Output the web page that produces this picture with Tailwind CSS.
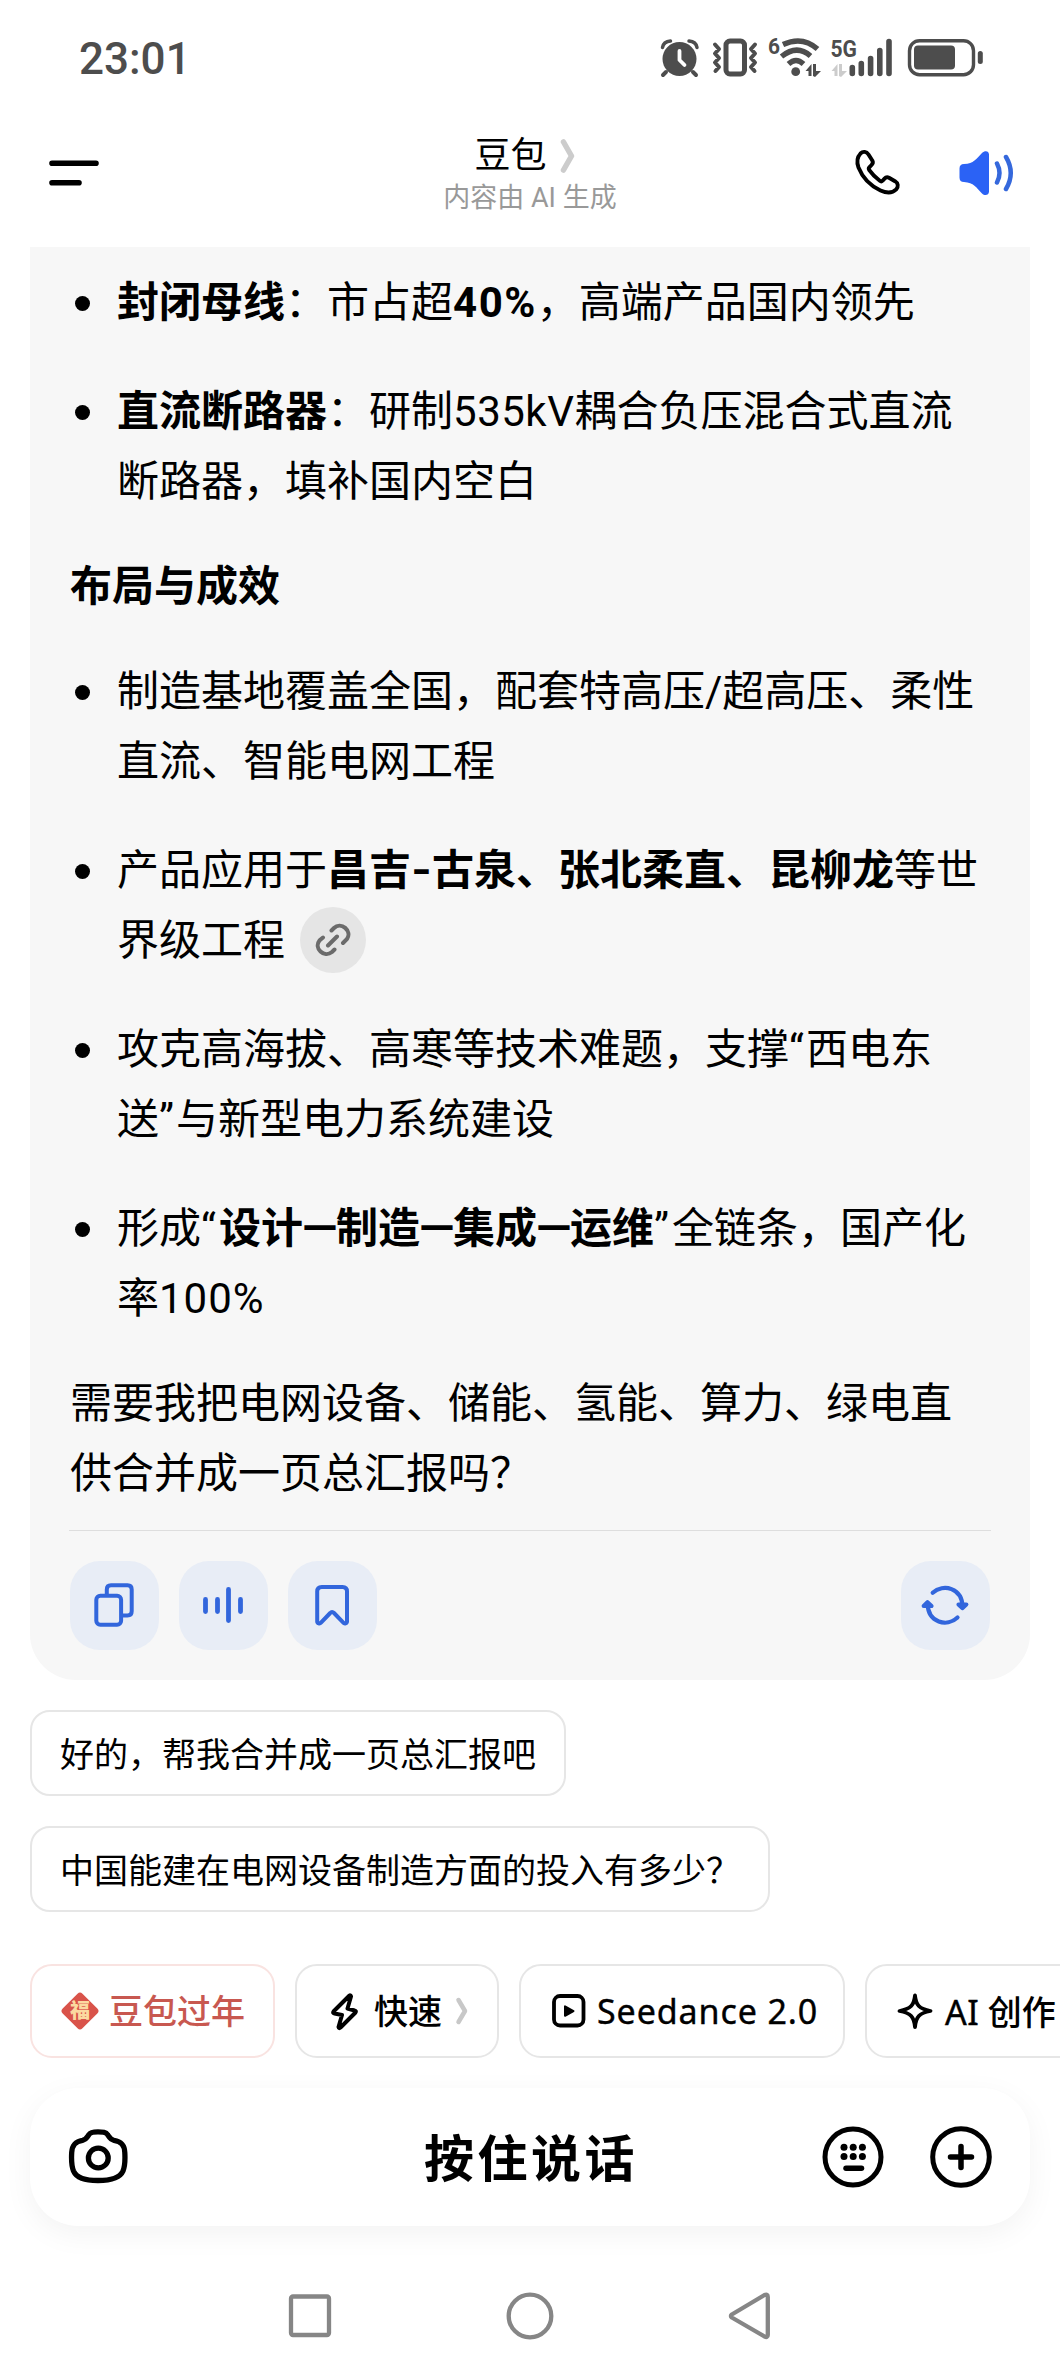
<!DOCTYPE html>
<html lang="zh-CN">
<head>
  <meta charset="UTF-8" />
  <meta name="viewport" content="width=device-width, initial-scale=1.0" />
  <title>豆包</title>
  <script src="https://cdn.jsdelivr.net/npm/@tailwindcss/browser@4"></script>
</head>
<body class="w-[1060px] h-[2376px] overflow-hidden bg-white text-black font-[Roboto,'Noto_Sans_CJK_SC',sans-serif] flex flex-col">

  <!-- status bar -->
  <div class="h-[115px] shrink-0 flex items-start justify-between">
    <div class="pl-[79px] pt-[33px] text-[44px] leading-[52px] font-medium text-[#4d4d4d]">23:01</div>
    <svg class="mt-5 mr-10 w-[380px] h-20" viewBox="640 20 380 80" fill="none" stroke="#4d4d4d" stroke-linecap="round" stroke-linejoin="round">
      <!-- alarm -->
      <circle cx="679.5" cy="59" r="17" fill="#4d4d4d" stroke="none" />
      <path d="M666 72l-3 3M693 72l3 3" stroke-width="4" />
      <path d="M662.500 47.500Q663.500 41.500 670.500 41M697 47.500Q696 41.500 689 41" stroke-width="3.500" />
      <path d="M679.500 51v9l5 5" stroke="#fff" stroke-width="3.800" />
      <!-- vibrate -->
      <rect x="726" y="41" width="18.500" height="33" rx="4" stroke-width="5" />
      <path d="M715 44.500l4 4.500-4 4.500 4 4.500-4 4.500 4 4.500-3.500 4M755 44.500l-4 4.500 4 4.500-4 4.500 4 4.500-4 4.500 3.500 4" stroke-width="4" />
      <!-- wifi -->
      <text x="768" y="53.500" font-size="22" font-weight="700" fill="#4d4d4d" stroke="none" textLength="12" lengthAdjust="spacingAndGlyphs">6</text>
      <path d="M783 44.500Q802.500 35.500 817.500 49M781.500 56.500Q797 44 810.500 56M788.500 64Q796 57 803.500 64" stroke-width="5.400" stroke-linecap="butt" />
      <circle cx="795.700" cy="71.700" r="4.400" fill="#4d4d4d" stroke="none" />
      <path d="M805.500 71l6-7v12h-3v-5zM813 64h3v7h5l-6 6-2-1z" fill="#4d4d4d" stroke="none" />
      <!-- mobile signal -->
      <text x="830.500" y="56.500" font-size="23.500" font-weight="700" fill="#4d4d4d" stroke="none" textLength="26.500" lengthAdjust="spacingAndGlyphs">5G</text>
      <path d="M831.500 71l6-7v12h-3v-5zM839 64h3v7h5l-6 6-2-1z" fill="#ccc" stroke="none" />
      <path d="M852.300 67.500v6M861.300 63.500v10M870.600 58.500v15M879.800 50.500v23M889 41.500v32" stroke-width="5.600" />
      <!-- battery -->
      <rect x="909.500" y="40.700" width="64" height="34" rx="10" stroke-width="3.400" />
      <rect x="914" y="45.500" width="41" height="24" rx="4" fill="#4d4d4d" stroke="none" />
      <path d="M980.300 53.500v8" stroke-width="5" />
    </svg>
  </div>

  <!-- header -->
  <header class="h-[132px] shrink-0 px-[48px] flex items-start justify-between">
    <svg class="w-[150px] h-[75px] mt-[20px]" viewBox="48 135 150 75" stroke="#000" stroke-width="5.600" stroke-linecap="round">
      <path d="M52 163.300h44M52 182.800h27" />
    </svg>
    <div class="flex flex-col items-center pt-[17px] pl-[10px]">
      <div class="flex items-center gap-[13px] mr-[10px] text-[36px] leading-[48px]">
        <span>豆包</span>
        <svg class="w-[16px] h-[36px]" viewBox="0 0 16 36" fill="none" stroke="#ccc" stroke-width="5.500" stroke-linecap="round" stroke-linejoin="round"><path d="M3.500 4l8 14-8 14" /></svg>
      </div>
      <div class="text-[27px] leading-[37px] text-[#999]">内容由 AI 生成</div>
    </div>
    <svg class="w-[165px] h-[75px] mt-[20px] mr-[-5px]" viewBox="852 135 165 75" fill="none" stroke-linecap="round" stroke-linejoin="round">
      <path d="M860.500 153.500C863 151 866.500 151.500 868.500 154.500L872.300 160.500C873.300 162.300 872.800 163.800 871.500 165L869.300 167.300C868.500 168.200 868.700 169.300 869.300 170.200C872.500 174.800 876 178 879.800 180.800C880.700 181.500 881.800 181.500 882.600 180.700L884.500 178.600C885.700 177.300 887.400 177 889 177.800L895 181.200C898.300 183.200 898.600 186.700 896.200 189.400C892.300 193.300 886.800 193.300 880.500 190.500C870.500 185.800 862.500 177.500 858.500 167.500C856.700 162.500 856.800 157.500 860.500 153.500Z" stroke="#000" stroke-width="3.900" />
      <path d="M959.500 168.500Q959.500 164 964 164C974 163.500 976 159 982 153C985 150 989 151 989 154.500V191.500C989 195 985 196.500 982 193.500C976 187.500 974 182.500 964 182Q959.500 182 959.500 177.500Z" fill="#2b62f5" />
      <path d="M997 163.500Q1002 173 997 182.500M1006 157Q1015.500 173 1006 189" stroke="#3568dc" stroke-width="4.500" />
    </svg>
  </header>

  <!-- answer card -->
  <main class="mx-[30px] h-[1433px] shrink-0 bg-[#f7f7f7] rounded-b-[46px] px-[40px] pt-[21px] flex flex-col text-[42px] leading-[70px] whitespace-nowrap">
    <ul class="flex flex-col gap-[39px]">
      <li class="flex"><span class="w-[15px] h-[15px] rounded-full bg-black mt-[28px] ml-[5px] mr-[27px]"></span><p><b>封闭母线</b>：市占超<b class="tracking-[1.500px]">40%</b>，高端产品国内领先</p></li>
      <li class="flex"><span class="w-[15px] h-[15px] rounded-full bg-black mt-[28px] ml-[5px] mr-[27px]"></span><p><b>直流断路器</b>：研制<span class="tracking-[0.500px]">535kV</span>耦合负压混合式直流<br />断路器，填补国内空白</p></li>
    </ul>
    <h3 class="font-bold my-[35px]">布局与成效</h3>
    <ul class="flex flex-col gap-[39px]">
      <li class="flex"><span class="w-[15px] h-[15px] rounded-full bg-black mt-[28px] ml-[5px] mr-[27px]"></span><p>制造基地覆盖全国，配套特高压/超高压、柔性<br />直流、智能电网工程</p></li>
      <li class="flex"><span class="w-[15px] h-[15px] rounded-full bg-black mt-[28px] ml-[5px] mr-[27px]"></span>
        <div>
          <p>产品应用于<b>昌吉<span class="inline-block w-[21px] text-center scale-x-125">-</span>古泉、张北柔直、昆柳龙</b>等世</p>
          <p class="flex items-center">界级工程
            <span class="ml-[15px] -mt-[3px] w-[66px] h-[66px] rounded-full bg-[#e5e5e5] flex items-center justify-center">
              <svg class="w-[36px] h-[36px]" viewBox="315 922 36 36" fill="none" stroke="#6b6b6b" stroke-width="4" stroke-linecap="round"><path d="M331.500 930.500L334 928C341 921 352.500 931 347 939L343 943M334.500 949.500L332 952C324 958.500 313.500 948 319.500 940.500L323 937.500M328 945.500l9-9" /></svg>
            </span>
          </p>
        </div>
      </li>
      <li class="flex"><span class="w-[15px] h-[15px] rounded-full bg-black mt-[28px] ml-[5px] mr-[27px]"></span><p>攻克高海拔、高寒等技术难题，支撑<span class="tracking-[2px]">“</span>西电东<br />送<span class="tracking-[2px]">”</span>与新型电力系统建设</p></li>
      <li class="flex"><span class="w-[15px] h-[15px] rounded-full bg-black mt-[28px] ml-[5px] mr-[27px]"></span><p>形成<span class="tracking-[3px]">“</span><b>设计<span class="inline-block w-[33px] text-center scale-x-110">—</span>制造<span class="inline-block w-[33px] text-center scale-x-110">—</span>集成<span class="inline-block w-[33px] text-center scale-x-110">—</span>运维</b><span class="tracking-[3px]">”</span>全链条，国产化<br />率<span class="tracking-[1px]">100%</span></p></li>
    </ul>
    <p class="mt-[35px]">需要我把电网设备、储能、氢能、算力、绿电直<br />供合并成一页总汇报吗？</p>
    <div class="h-px shrink-0 bg-[#dedede] mt-[21px] -mx-px"></div>
    <div class="flex gap-5 mt-[30px]">
      <button class="w-[89px] h-[89px] rounded-[30px] bg-[#e8edf6]">
        <svg class="w-[89px] h-[89px]" viewBox="0 0 89 89" fill="none" stroke="#3266dc" stroke-width="4" stroke-linejoin="round"><path d="M36.800 33.500V28.500Q36.800 24.300 41 24.300H57.500Q61.700 24.300 61.700 28.500V50.300Q61.700 54.500 57.500 54.500H52" /><rect x="26.300" y="34.800" width="24.800" height="29" rx="4" /></svg>
      </button>
      <button class="w-[89px] h-[89px] rounded-[30px] bg-[#e8edf6]">
        <svg class="w-[89px] h-[89px]" viewBox="0 0 89 89" fill="none" stroke="#3266dc" stroke-width="4.800" stroke-linecap="round"><path d="M26.500 38.500v12M38.500 38.500v12M49.500 28.500v31M61.500 38.500v12" /></svg>
      </button>
      <button class="w-[89px] h-[89px] rounded-[30px] bg-[#e8edf6]">
        <svg class="w-[89px] h-[89px]" viewBox="0 0 89 89" fill="none" stroke="#3266dc" stroke-width="4" stroke-linejoin="round"><path d="M29.200 30.500Q29.200 26 33.700 26H54.500Q59 26 59 30.500V60.500C59 62.300 56.500 63 55.300 61.600L46 52Q44 50 42.200 52L33 61.600C31.700 63 29.200 62.300 29.200 60.500Z" /></svg>
      </button>
      <button class="w-[89px] h-[89px] rounded-[30px] bg-[#e8edf6] ml-auto">
        <svg class="w-[89px] h-[89px]" viewBox="0 0 89 89" fill="none" stroke="#3266dc" stroke-width="4.200" stroke-linecap="round" stroke-linejoin="round"><path d="M31.700 31.800C42 22 61.500 27 61.500 46M56.500 56.500C46 66.500 27 61.500 26.700 43" /><path d="M57.500 43.500l3.800 3.600 4-3.600zM22.700 45l3.800-3.800 4 3.800z" fill="#2b62f5" /></svg>
      </button>
    </div>
  </main>

  <!-- suggested replies -->
  <div class="shrink-0 mt-[30px] ml-[30px] flex flex-col items-start gap-[30px] text-[34px] leading-[44px]">
    <button class="h-[86px] px-[28px] pt-[3px] border-2 border-[#e6e6e6] rounded-[20px]">好的，帮我合并成一页总汇报吧</button>
    <button class="h-[86px] px-[28px] pt-[3px] border-2 border-[#e6e6e6] rounded-[20px]">中国能建在电网设备制造方面的投入有多少？</button>
  </div>

  <!-- shortcuts -->
  <div class="shrink-0 mt-[52px] pl-[30px] w-[1060px] overflow-hidden flex gap-5 text-[34px] leading-[44px] font-medium whitespace-nowrap">
    <button class="shrink-0 w-[245px] h-[94px] pl-[28px] border-2 border-[#f9e3e1] rounded-[22px] flex items-center text-[#c85850]">
      <svg class="w-[40px] h-[40px] mr-[9px]" viewBox="0 0 40 40"><rect x="6" y="6" width="28" height="28" rx="3.500" fill="#d9534a" transform="rotate(45 20 20)" /><text x="20" y="27" font-size="20" font-weight="900" fill="#fbd9a0" text-anchor="middle">福</text></svg>
      <span class="pt-[2px]">豆包过年</span>
    </button>
    <button class="shrink-0 w-[204px] h-[94px] pl-[34px] border-2 border-[#e6e6e6] rounded-[22px] flex items-center">
      <svg class="w-[28px] h-[40px] mr-[15px]" viewBox="331 1991 28 40" fill="none" stroke="#000" stroke-width="4" stroke-linecap="round" stroke-linejoin="round"><path d="M349.500 1995.500L333.500 2011.500Q332.500 2013 334.500 2013.500L342 2015L338.500 2027Q338.800 2029 340.500 2027.500L355.500 2012.500Q356.500 2011 354.500 2010.500L347.500 2008.500L351 1996.500Q350.500 1995 349.500 1995.500Z" /></svg>
      <span class="pt-[2px]">快速</span>
      <svg class="w-[14px] h-[30px] ml-[13px]" viewBox="0 0 14 30" fill="none" stroke="#c8c8c8" stroke-width="4.500" stroke-linecap="round" stroke-linejoin="round"><path d="M3.500 4l6.500 11-6.500 11" /></svg>
    </button>
    <button class="shrink-0 w-[326px] h-[94px] pl-[31px] border-2 border-[#e6e6e6] rounded-[22px] flex items-center">
      <svg class="w-[34px] h-[34px] mr-[11px]" viewBox="0 0 34 34"><rect x="2" y="2" width="29.500" height="29.500" rx="6" fill="none" stroke="#000" stroke-width="3.800" /><path d="M13 12.300v9.500l8.500-4.700z" stroke="#000" stroke-width="2" stroke-linejoin="round" /></svg>
      <span class="font-['Noto_Sans'] font-normal tracking-[0.900px] [-webkit-text-stroke:0.4px_#000]">Seedance 2.0</span>
    </button>
    <button class="shrink-0 w-[260px] h-[94px] pl-[30px] border-2 border-[#e6e6e6] rounded-[22px] flex items-center">
      <svg class="w-[36px] h-[36px] mr-[12px]" viewBox="0 0 36 36" fill="none" stroke="#000" stroke-width="3.800" stroke-linejoin="round"><path d="M18 2.500C19 12 22 16 33.500 18C22 20 19 24 18 34C17 24 14 20 2.500 18C14 16 17 12 18 2.500Z" /></svg>
      <span class="pt-[2px]"><span class="font-['Noto_Sans'] font-normal tracking-[0.500px] [-webkit-text-stroke:0.4px_#000]">AI</span> 创作</span>
    </button>
  </div>

  <!-- voice input -->
  <div class="shrink-0 mt-[30px] mx-[30px] h-[138px] rounded-[48px] bg-white shadow-[0_8px_30px_rgba(0,0,0,0.05)] pl-[38px] pr-[38px] grid grid-cols-[1fr_auto_1fr] items-center">
    <svg class="w-[60px] h-[60px]" viewBox="68 2127 60 60" fill="none" stroke="#000" stroke-width="5.300" stroke-linejoin="round"><path d="M98 2131.800C103 2131.800 106 2132 107.500 2134.500C109.500 2137.500 110 2139.500 114 2140.300C121 2141.500 124.500 2144.500 124.800 2152.500C125.300 2161 125 2166 123 2171C120 2178 112 2180.500 98 2180.500C84 2180.500 76.500 2178 73.500 2171C71.500 2166 71.200 2161 71.700 2152.500C72.200 2144.500 75.500 2141.500 82.500 2140.300C86.500 2139.500 87 2137.500 89 2134.500C90.500 2132 93.500 2131.800 98 2131.800Z" /><circle cx="98.300" cy="2158" r="9.900" /></svg>
    <span class="text-[50px] leading-[64px] font-bold tracking-[3.500px] pl-[2px] pt-[5px]">按住说话</span>
    <div class="flex justify-end gap-[46px]">
      <svg class="w-[62px] h-[62px]" viewBox="0 0 62 62" fill="none" stroke="#000" stroke-width="5" stroke-linecap="round"><circle cx="31" cy="31" r="28" /><path d="M24 42.300h15.500" stroke-width="5.500" /><g fill="#000" stroke="none"><circle cx="22" cy="21.300" r="3.500" /><circle cx="31.200" cy="21.300" r="3.500" /><circle cx="40.400" cy="21.300" r="3.500" /><circle cx="22" cy="30.500" r="3.500" /><circle cx="31.200" cy="30.500" r="3.500" /><circle cx="40.400" cy="30.500" r="3.500" /></g></svg>
      <svg class="w-[62px] h-[62px]" viewBox="0 0 62 62" fill="none" stroke="#000" stroke-width="5" stroke-linecap="round"><circle cx="31" cy="31" r="28.300" /><path d="M20.500 31h21M31 20.500v21" stroke-width="5.500" /></svg>
    </div>
  </div>

  <!-- system navigation -->
  <nav class="shrink-0 mt-[60px] pl-[285px] flex gap-[170px]">
    <svg class="w-[50px] h-[60px]" viewBox="285 2286 50 60" fill="none" stroke="#868686" stroke-width="4.300"><rect x="291" y="2296.500" width="38" height="38.500" rx="2" /></svg>
    <svg class="w-[50px] h-[60px]" viewBox="505 2286 50 60" fill="none" stroke="#868686" stroke-width="4.300"><circle cx="530" cy="2316" r="21.300" /></svg>
    <svg class="w-[50px] h-[60px]" viewBox="725 2286 50 60" fill="none" stroke="#868686" stroke-width="4.300" stroke-linejoin="round"><path d="M731.800 2314.500L764.500 2295Q767.800 2293.500 767.800 2297V2335Q767.800 2338 764.500 2336.500L731.800 2317.500Q730 2316 731.800 2314.500Z" /></svg>
  </nav>

</body>
</html>
